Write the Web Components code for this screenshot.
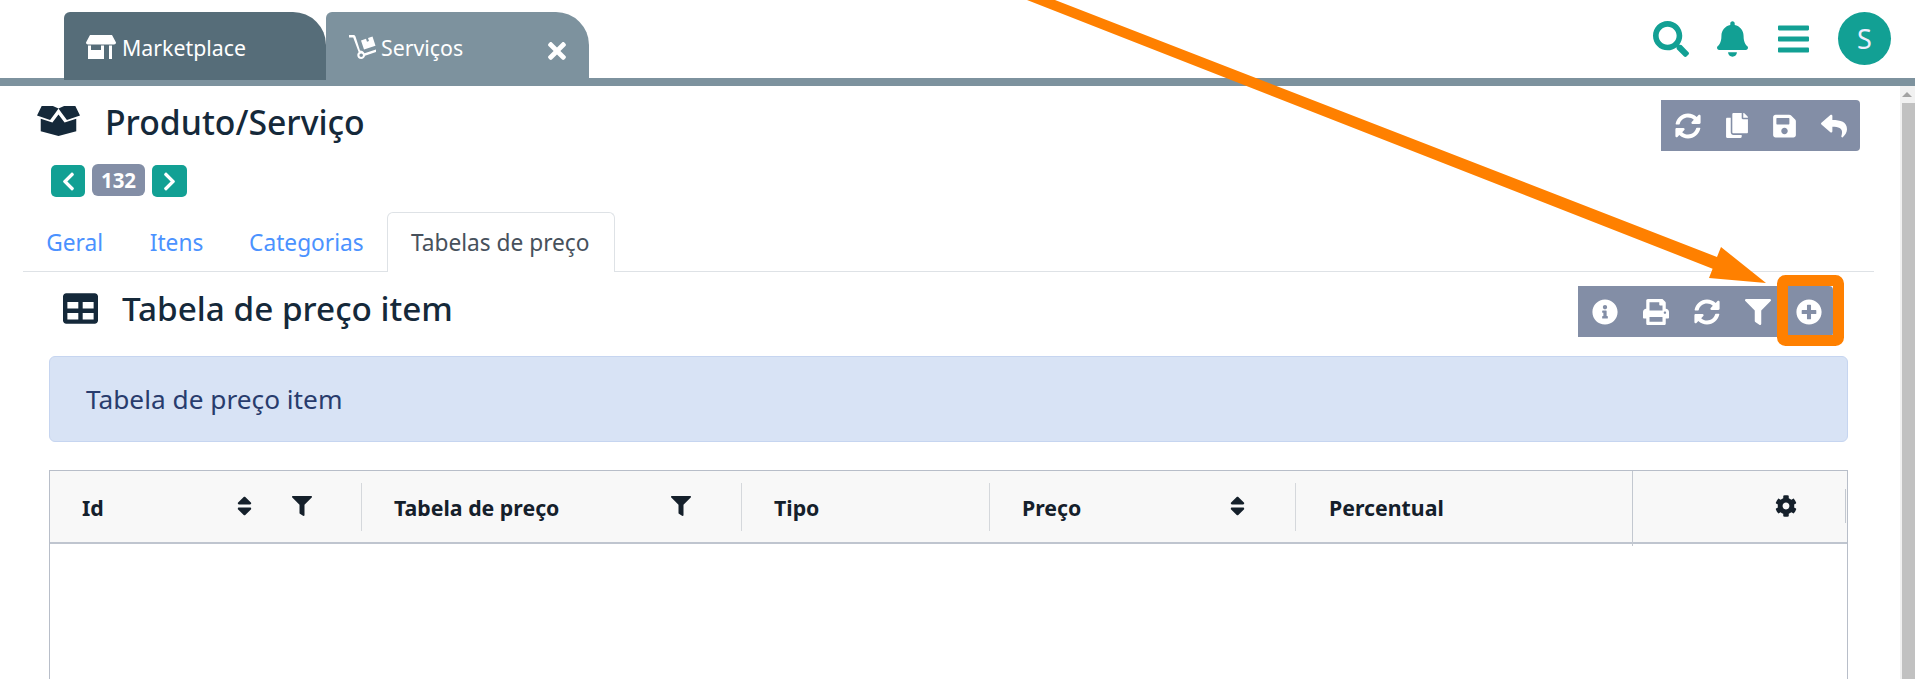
<!DOCTYPE html>
<html lang="pt"><head><meta charset="utf-8"><title>Produto/Serviço</title>
<style>
html,body{margin:0;height:679px;overflow:hidden;background:#fff;font-family:"Noto Sans",sans-serif}
</style></head><body>
<app-shell></app-shell>
<script>
const P={
search:[512,512,"M505 442.7L405.3 343c-4.5-4.5-10.6-7-17-7H372c27.6-35.3 44-79.7 44-128C416 93.1 322.9 0 208 0S0 93.1 0 208s93.1 208 208 208c48.3 0 92.7-16.4 128-44v16.3c0 6.4 2.5 12.5 7 17l99.7 99.7c9.4 9.4 24.6 9.4 33.9 0l28.3-28.3c9.4-9.4 9.4-24.6.1-34zM208 336c-70.7 0-128-57.2-128-128 0-70.7 57.2-128 128-128 70.7 0 128 57.2 128 128 0 70.7-57.2 128-128 128z"],
bell:[448,512,"M224 512c35.32 0 63.97-28.65 63.97-64H160.03c0 35.35 28.65 64 63.97 64zm215.39-149.71c-19.32-20.76-55.47-51.99-55.47-154.29 0-77.7-54.48-139.9-127.94-155.16V32c0-17.67-14.32-32-31.98-32s-31.98 14.33-31.98 32v20.84C118.56 68.1 64.08 130.3 64.08 208c0 102.3-36.15 133.53-55.47 154.29-6 6.45-8.66 14.16-8.61 21.71.11 16.4 12.98 32 32.1 32h383.8c19.12 0 32-15.6 32.1-32 .05-7.55-2.61-15.27-8.61-21.71z"],
bars:[448,512,"M16 132h416c8.837 0 16-7.163 16-16V76c0-8.837-7.163-16-16-16H16C7.163 60 0 67.163 0 76v40c0 8.837 7.163 16 16 16zm0 160h416c8.837 0 16-7.163 16-16v-40c0-8.837-7.163-16-16-16H16c-8.837 0-16 7.163-16 16v40c0 8.837 7.163 16 16 16zm0 160h416c8.837 0 16-7.163 16-16v-40c0-8.837-7.163-16-16-16H16c-8.837 0-16 7.163-16 16v40c0 8.837 7.163 16 16 16z"],
sync:[512,512,"M370.72 133.28C339.458 104.008 298.888 87.962 255.848 88c-77.458.068-144.328 53.178-162.791 126.85-1.344 5.363-6.122 9.15-11.651 9.15H24.103c-7.498 0-13.194-6.807-11.807-14.176C33.933 94.924 134.813 8 256 8c66.448 0 126.791 26.136 171.315 68.685L463.03 40.97C478.149 25.851 504 36.559 504 57.941V192c0 13.255-10.745 24-24 24H345.941c-21.382 0-32.09-25.851-16.971-40.971l41.75-41.749zM32 296h134.059c21.382 0 32.09 25.851 16.971 40.971l-41.75 41.75c31.262 29.273 71.835 45.319 114.876 45.28 77.418-.07 144.315-53.144 162.787-126.849 1.344-5.363 6.122-9.15 11.651-9.15h57.304c7.498 0 13.194 6.807 11.807 14.176C478.067 417.076 377.187 504 256 504c-66.448 0-126.791-26.136-171.315-68.685L48.97 471.03C33.851 486.149 8 475.441 8 454.059V320c0-13.255 10.745-24 24-24z"],
copy:[448,512,"M320 448v40c0 13.255-10.745 24-24 24H24c-13.255 0-24-10.745-24-24V120c0-13.255 10.745-24 24-24h72v296c0 30.879 25.121 56 56 56h168zm0-344V0H152c-13.255 0-24 10.745-24 24v368c0 13.255 10.745 24 24 24h272c13.255 0 24-10.745 24-24V128H344c-13.2 0-24-10.8-24-24zm120.971-31.029L375.029 7.029A24 24 0 0 0 358.059 0H352v96h96v-6.059a24 24 0 0 0-7.029-16.97z"],
save:[448,512,"M433.941 129.941l-83.882-83.882A48 48 0 0 0 316.118 32H48C21.49 32 0 53.49 0 80v352c0 26.51 21.49 48 48 48h352c26.51 0 48-21.49 48-48V163.882a48 48 0 0 0-14.059-33.941zM224 416c-35.346 0-64-28.654-64-64 0-35.346 28.654-64 64-64s64 28.654 64 64c0 35.346-28.654 64-64 64zm96-304.52V212c0 6.627-5.373 12-12 12H76c-6.627 0-12-5.373-12-12V108c0-6.627 5.373-12 12-12h228.52c3.183 0 6.235 1.264 8.485 3.515l3.48 3.48A11.996 11.996 0 0 1 320 111.48z"],
reply:[512,512,"M8.309 189.836L184.313 37.851C199.719 24.546 224 35.347 224 56.015v80.053c160.629 1.839 288 34.032 288 186.258 0 61.441-39.581 122.309-83.333 154.132-13.653 9.931-33.111-2.533-28.077-18.631 45.344-145.012-21.507-183.51-176.59-185.742V360c0 20.7-24.3 31.453-39.687 18.164l-176.004-152c-11.071-9.562-11.086-26.753 0-36.328z"],
info:[512,512,"M256 8C119.043 8 8 119.083 8 256c0 136.997 111.043 248 248 248s248-111.003 248-248C504 119.083 392.957 8 256 8zm0 110c23.196 0 42 18.804 42 42s-18.804 42-42 42-42-18.804-42-42 18.804-42 42-42zm56 254c0 6.627-5.373 12-12 12h-88c-6.627 0-12-5.373-12-12v-24c0-6.627 5.373-12 12-12h12v-64h-12c-6.627 0-12-5.373-12-12v-24c0-6.627 5.373-12 12-12h64c6.627 0 12 5.373 12 12v100h12c6.627 0 12 5.373 12 12v24z"],
print:[512,512,"M448 192V77.25c0-8.49-3.37-16.62-9.37-22.63L393.37 9.37c-6-6-14.14-9.37-22.63-9.37H96C78.33 0 64 14.33 64 32v160c-35.35 0-64 28.65-64 64v112c0 8.84 7.16 16 16 16h48v96c0 17.67 14.33 32 32 32h320c17.67 0 32-14.33 32-32v-96h48c8.84 0 16-7.16 16-16V256c0-35.35-28.65-64-64-64zm-64 256H128v-96h256v96zm0-224H128V64h192v48c0 8.84 7.16 16 16 16h48v96zm48 72c-13.25 0-24-10.75-24-24 0-13.26 10.75-24 24-24s24 10.74 24 24c0 13.25-10.75 24-24 24z"],
filter:[512,512,"M487.976 0H24.028C2.71 0-8.047 25.866 7.058 40.971L192 225.941V432c0 7.831 3.821 15.17 10.237 19.662l80 55.98C298.02 518.69 320 507.493 320 487.98V225.941l184.947-184.97C520.021 25.896 509.338 0 487.976 0z"],
plus:[512,512,"M256 8C119 8 8 119 8 256s111 248 248 248 248-111 248-248S393 8 256 8zm144 276c0 6.6-5.4 12-12 12h-92v92c0 6.6-5.4 12-12 12h-56c-6.6 0-12-5.4-12-12v-92h-92c-6.6 0-12-5.4-12-12v-56c0-6.6 5.4-12 12-12h92v-92c0-6.6 5.4-12 12-12h56c6.6 0 12 5.4 12 12v92h92c6.6 0 12 5.4 12 12v56z"],
sort:[320,512,"M41 288h238c21.4 0 32.1 25.9 17 41L177 448c-9.4 9.4-24.6 9.4-33.9 0L24 329c-15.1-15.1-4.4-41 17-41zm255-105L177 64c-9.4-9.4-24.6-9.4-33.9 0L24 183c-15.1 15.1-4.4 41 17 41h238c21.4 0 32.1-25.9 17-41z"],
cog:[512,512,"M487.4 315.7l-42.6-24.6c4.3-23.2 4.3-47 0-70.2l42.6-24.6c4.9-2.8 7.1-8.6 5.5-14-11.1-35.6-30-67.8-54.7-94.6-3.8-4.1-10-5.1-14.8-2.3L380.8 110c-17.9-15.4-38.5-27.3-60.8-35.1V25.8c0-5.6-3.9-10.5-9.4-11.7-36.7-8.2-74.3-7.8-109.2 0-5.5 1.2-9.4 6.1-9.4 11.7V75c-22.2 7.9-42.8 19.8-60.8 35.1L88.7 85.5c-4.9-2.8-11-1.9-14.8 2.3-24.7 26.7-43.6 58.9-54.7 94.6-1.7 5.4.6 11.2 5.5 14L67.3 221c-4.3 23.2-4.3 47 0 70.2l-42.6 24.6c-4.9 2.8-7.1 8.6-5.5 14 11.1 35.6 30 67.8 54.7 94.6 3.8 4.1 10 5.1 14.8 2.3l42.6-24.6c17.9 15.4 38.5 27.3 60.8 35.1v49.2c0 5.6 3.9 10.5 9.4 11.7 36.7 8.2 74.3 7.8 109.2 0 5.5-1.2 9.4-6.1 9.4-11.7v-49.2c22.2-7.9 42.8-19.8 60.8-35.1l42.6 24.6c4.9 2.8 11 1.9 14.8-2.3 24.7-26.7 43.6-58.9 54.7-94.6 1.5-5.5-.7-11.3-5.6-14.1zM256 336c-44.1 0-80-35.9-80-80s35.9-80 80-80 80 35.9 80 80-35.9 80-80 80z"],
table:[512,512,"M464 32H48C21.49 32 0 53.49 0 80v352c0 26.51 21.49 48 48 48h416c26.51 0 48-21.49 48-48V80c0-26.51-21.49-48-48-48zM224 416H64v-96h160v96zm0-160H64v-96h160v96zm224 160H288v-96h160v96zm0-160H288v-96h160v96z"],
left:[320,512,"M34.52 239.03L228.87 44.69c9.37-9.37 24.57-9.37 33.94 0l22.67 22.67c9.36 9.36 9.37 24.52.04 33.9L131.49 256l154.02 154.75c9.34 9.38 9.32 24.54-.04 33.9l-22.67 22.67c-9.37 9.37-24.57 9.37-33.94 0L34.52 272.97c-9.37-9.37-9.37-24.57 0-33.94z"],
right:[320,512,"M285.476 272.971L91.132 467.314c-9.373 9.373-24.569 9.373-33.941 0l-22.667-22.667c-9.357-9.357-9.375-24.522-.04-33.901L188.505 256 34.484 101.255c-9.335-9.379-9.317-24.544.04-33.901l22.667-22.667c9.373-9.373 24.569-9.373 33.941 0L285.475 239.03c9.373 9.372 9.373 24.568.001 33.941z"],
times:[352,512,"M242.72 256l100.07-100.07c12.28-12.28 12.28-32.19 0-44.48l-22.24-22.24c-12.28-12.28-32.19-12.28-44.48 0L176 189.28 75.93 89.21c-12.28-12.28-32.19-12.28-44.48 0L9.21 111.45c-12.28 12.28-12.28 32.19 0 44.48L109.28 256 9.21 356.07c-12.28 12.28-12.28 32.19 0 44.48l22.24 22.24c12.28 12.28 32.2 12.28 44.48 0L176 322.72l100.07 100.07c12.28 12.28 32.2 12.28 44.48 0l22.24-22.24c12.28-12.28 12.28-32.19 0-44.48L242.72 256z"],
store:[30,24,"M4 0h22l4 7.500c0 1.200-.8 2-2 2H2c-1.200 0-2-.8-2-2zM2 10.500h3V15h10v-4.500h3V24H2zM23 10.500h3V24h-3z"],
dolly:[27,24,"M0 0h4.500c1 0 1.700.6 2 1.500L11 15.500c2.200.1 3.800 1.200 4.500 2.800L27 14.500l.6 2.400-11.600 3.900c-.2 1.900-1.900 3.200-3.800 3.200-2.200 0-3.900-1.700-3.900-3.800 0-1.200.5-2.200 1.400-2.900L4.200 2.600H0zM12.200 18.400a1.800 1.800 0 1 0 0 3.600 1.800 1.800 0 0 0 0-3.600zM12 5.500l5-1.700 1 3 2-.7-1-3 4.500-1.500 3 9.200-11.500 3.800z"],
box:[46,32,"M5 0l12 0 6 2.500L20 7 14 15 0 10zM29 0l12 0 5 10-14 5-6-8-3-4.500zM23 9l6.500 8.500L42 13.500V27L23 32 4 27V13.500l12.500 4z"]
};
function ic(n,w,h,c){const p=P[n];return `<svg width="${w}" height="${h}" viewBox="0 0 ${p[0]} ${p[1]}" fill="${c||'currentColor'}" aria-hidden="true"><path fill-rule="evenodd" d="${p[2]}"/></svg>`}
function def(name,render){customElements.define(name,class extends HTMLElement{connectedCallback(){if(this.shadowRoot)return;this.attachShadow({mode:'open'}).innerHTML=render(this)}})}

def('app-tab',el=>`<style>
:host{display:flex;align-items:flex-start;box-sizing:border-box;width:var(--w,263px);height:68px;border-radius:6px 33px 0 0;color:#fff;font-size:21.3px;line-height:28px;background:var(--bg);padding:22px 0 0 var(--pl);gap:var(--g);position:relative}
.t{flex:1}.x{margin:4px 22px 0 0;display:flex}.i{display:flex;margin-top:1px}
</style><span class="i"><slot name="icon"></slot></span><span class="t"><slot></slot></span>${el.hasAttribute('closable')?`<span class="x">${ic('times',20,26)}</span>`:''}`);

def('top-bar',()=>`<style>
:host{display:flex;height:86px;box-sizing:border-box;border-bottom:8px solid #7d929e;padding:12px 0 0 64px;justify-content:space-between;position:relative}
.tabs{display:flex;height:68px;z-index:1}
.tools{display:flex;align-items:flex-start;color:#12a094;padding-right:24px}
.a{display:flex;margin-top:9px}
.av{width:53px;height:53px;border-radius:50%;background:#12a094;color:#eef;display:flex;align-items:center;justify-content:center;font-size:27px;margin-left:29px}
</style><div class="tabs"><slot name="tabs"></slot></div>
<div class="tools"><span class="a" style="margin-right:28px">${ic('search',36,36)}</span><span class="a" style="margin-right:30px">${ic('bell',31,36)}</span><span class="a">${ic('bars',31,36)}</span><span class="av">S</span></div>`);

def('tool-group',()=>`<style>:host{display:flex;align-items:center;height:51px;background:#838ea6;border-radius:0 4px 4px 0;color:#fff;box-sizing:border-box;padding:0 0 0 14px;gap:25px;flex:none}
::slotted(*){display:flex}</style><slot></slot>`);

def('pager-badge',()=>`<style>:host{display:flex;align-items:flex-start;gap:7px;margin:13px 0 0 28px;height:33px}
b{display:flex;align-items:center;justify-content:center;background:#12a094;color:#fff;border-radius:5px;width:34px;height:32px;margin-top:1px}
b.n{background:#838ea6;width:53px;margin:0;border-radius:6px;font-size:20.5px;font-weight:700;height:32px}
b.r{width:35px}</style><b>${ic('left',15,21)}</b><b class="n">132</b><b class="r">${ic('right',15,21)}</b>`);

def('page-head',()=>`<style>:host{display:flex;justify-content:space-between;align-items:flex-start;padding:14px 14px 0 14px;color:#15293a}
.h{display:flex;align-items:flex-start}
h1{margin:-1px 0 0 25px;font-size:33.75px;font-weight:500;line-height:46px;height:37px}
.i{display:flex;margin-top:5px}</style><div class="h"><span class="i">${ic('box',43,32)}</span><h1>Produto/Serviço</h1></div><slot></slot>`);

def('nav-tabs',()=>`<style>:host{display:flex;align-items:flex-end;height:59px;margin-top:15px;border-bottom:1px solid #dee2e6;font-size:22.7px}
a{color:#4b92ff;padding:0 23.3px;height:52px;line-height:48px;display:block}
a.it{padding-right:22.5px}
a.a{color:#47515c;box-sizing:border-box;line-height:60px;border:1px solid #dee2e6;border-bottom:0;border-radius:6px 6px 0 0;background:#fff;width:228px;padding:0 0 0 23px;margin-bottom:-1px;height:60px}</style>
<a>Geral</a><a class="it">Itens</a><a>Categorias</a><a class="a">Tabelas de preço</a>`);

def('section-head',()=>`<style>:host{display:flex;justify-content:space-between;align-items:flex-start;padding:14px 41px 0 40px;color:#15293a;height:51px}
.h{display:flex}.i{display:flex;margin:5px 0 0 0}
h2{margin:-1px 0 0 24px;font-size:33.3px;font-weight:500;line-height:46px;height:40px}</style><div class="h"><span class="i">${ic('table',35,35)}</span><h2>Tabela de preço item</h2></div><slot></slot>`);

def('info-alert',()=>`<style>:host{display:flex;align-items:center;box-sizing:border-box;height:86px;margin:19px 26px 0 26px;background:#d8e3f5;border:1px solid #c6d5f0;border-radius:6px;padding:0 0 0 36px;color:#283c6d;font-size:26.25px}</style><slot></slot>`);

def('data-table',()=>`<style>:host{display:block;margin:28px 26px 0 26px;border:1px solid #b8bec9;border-bottom:0;height:300px;box-sizing:border-box}
.hd{display:grid;grid-template-columns:312px 380px 248px 306px 337px 1fr;height:73px;box-sizing:border-box;background:#f8f8f8;border-bottom:2px solid #bfc5cf;color:#15202b}
</style><div class="hd"><slot></slot></div>`);

def('th-cell',el=>`<style>:host{display:flex;align-items:center;padding-left:var(--pl,32px);padding-top:2px;font-size:21.3px;font-weight:700;position:relative;box-sizing:border-box}
:host::after{content:"";position:absolute;right:0;top:12px;bottom:11px;width:1px;background:#d5d8dc}
:host([wide])::after{top:0;bottom:-4px;background:#c3c8d0;left:-1px;right:auto}
:host([wide])::before{content:"";position:absolute;right:1px;top:18px;height:34px;width:1px;background:#c3c8d0}
.t{flex:1}.s{display:flex;margin-right:var(--sr,0)}.f{display:flex;margin-right:var(--fr,0)}.w{display:flex;align-items:center;margin-top:-3px}
</style><span class="t"><slot></slot></span><span class="w">${el.hasAttribute('sort')?`<span class="s">${ic('sort',15,24)}</span>`:''}${el.hasAttribute('filter')?`<span class="f">${ic('filter',20,20)}</span>`:''}${el.hasAttribute('cog')?ic('cog',22,22):''}</span>`);

def('fake-scroll',()=>`<style>:host{display:flex;flex:none;flex-direction:column;width:15px;background:#f1f1f1;height:593px;align-items:flex-end}
i{display:block;width:0;height:0;margin:6px 3px 6px 0;border:5px solid transparent;border-top:0;border-bottom:5px solid #a3a3a3}
b{display:block;width:13px;flex:1;background:#c1c1c1}</style><i></i><b></b>`);

def('arrow-note',()=>`<style>:host{position:absolute;left:0;top:0;width:1915px;height:679px;pointer-events:none;z-index:5}svg{display:block}</style>
<svg width="1915" height="679" viewBox="0 0 1915 679"><polygon fill="#ff8000" points="1027,0 1055,0 1717,257 1721,247 1766,283 1709,278 1712.600,268.700"/><rect x="1782.500" y="280.500" width="56" height="60" rx="3" fill="none" stroke="#ff8000" stroke-width="11"/></svg>`);

def('app-shell',()=>`<style>:host{display:block;position:relative;width:1915px;height:679px;overflow:hidden;color:#15293a}
.b{display:flex;width:1915px}.m{width:1851px;padding:0 26px 0 23px;flex:none}</style>
<top-bar>
 <app-tab slot="tabs" style="--w:262px;--bg:#566d79;--pl:22px;--g:6px">${ic('store',30,24).replace('<svg','<svg slot="icon"')}Marketplace</app-tab>
 <app-tab slot="tabs" closable style="--bg:#7d929e;--pl:23px;--g:5px">${ic('dolly',27,24).replace('<svg','<svg slot="icon"')}Serviços</app-tab>
</top-bar>
<div class="b"><div class="m">
<page-head><tool-group style="width:199px">
<span>${ic('sync',26,26)}</span><span>${ic('copy',22,25)}</span><span>${ic('save',23,26)}</span><span>${ic('reply',26,26)}</span></tool-group></page-head>
<pager-badge></pager-badge>
<nav-tabs></nav-tabs>
<section-head><tool-group style="width:255px">
<span>${ic('info',26,26)}</span><span>${ic('print',26,26)}</span><span>${ic('sync',26,26)}</span><span>${ic('filter',26,26)}</span><span>${ic('plus',26,26)}</span></tool-group></section-head>
<info-alert>Tabela de preço item</info-alert>
<data-table>
<th-cell sort filter style="--sr:40px;--fr:50px">Id</th-cell>
<th-cell filter style="--fr:51px">Tabela de preço</th-cell>
<th-cell>Tipo</th-cell>
<th-cell sort style="--sr:51px;--pl:32px">Preço</th-cell>
<th-cell style="--pl:33px">Percentual</th-cell>
<th-cell wide cog style="--pl:0;justify-content:flex-end;padding-right:50px"></th-cell>
</data-table>
</div><fake-scroll></fake-scroll></div>
<arrow-note></arrow-note>`);
</script>
</body></html>
